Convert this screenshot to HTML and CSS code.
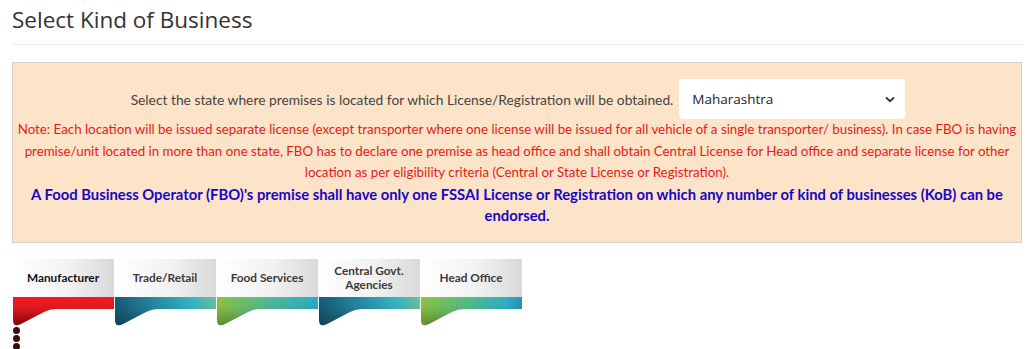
FILE: index.html
```
<!DOCTYPE html>
<html>
<head>
	<meta charset="utf-8">
	<title>Select Kind of Business</title>
	<link rel="stylesheet" href="styles.css">
</head>
<body>
	<div class="page">
		<h2 class="title">Select Kind of Business</h2>

		<div class="notice">
			<div class="state-row">
				<label for="state">Select the state where premises is located for which License/Registration will be obtained.</label>
				<div class="select">
					<span>Maharashtra</span>
					<svg width="10" height="7" viewBox="0 0 10 7"><path d="M1 1.5 L5 5.2 L9 1.5" fill="none" stroke="#333" stroke-width="1.8"/></svg>
				</div>
			</div>
			<p class="note-red">Note: Each location will be issued separate license (except transporter where one license will be issued for all vehicle of a single transporter/ business). In case FBO is having premise/unit located in more than one state, FBO has to declare one premise as head office and shall obtain Central License for Head office and separate license for other location as per eligibility criteria (Central or State License or Registration).</p>
			<p class="note-blue">A Food Business Operator (FBO)'s premise shall have only one FSSAI License or Registration on which any number of kind of businesses (KoB) can be endorsed.</p>
		</div>

		<ul class="kob-tabs">
			<li class="tab active">
				<div class="tab-label">Manufacturer</div>
				<svg class="band" width="102" height="32" viewBox="0 0 102 32">
					<defs>
						<linearGradient id="gRed" x1="0" y1="0" x2="0" y2="1">
							<stop offset="0" stop-color="#f01c24"/>
							<stop offset="0.4" stop-color="#e0171e"/>
							<stop offset="1" stop-color="#7a0a0c"/>
						</linearGradient>
					</defs>
					<path d="M0 0 H102 V12 H44 Q38 12 32 15 L9 27 Q1 31 1 23 V0 Z" fill="url(#gRed)"/>
				</svg>
				<div class="dots"><span></span><span></span><span></span></div>
			</li>
			<li class="tab">
				<div class="tab-label">Trade/Retail</div>
				<svg class="band" width="102" height="32" viewBox="0 0 102 32">
					<defs>
						<linearGradient id="gTeal1" x1="0" y1="0" x2="1" y2="0">
							<stop offset="0" stop-color="#145a78"/>
							<stop offset="0.75" stop-color="#36b4c8"/>
							<stop offset="1" stop-color="#6cc39a"/>
						</linearGradient>
						<linearGradient id="gShade" x1="0" y1="0" x2="0" y2="1">
							<stop offset="0" stop-color="#000" stop-opacity="0"/>
							<stop offset="0.4" stop-color="#000" stop-opacity="0.05"/>
							<stop offset="1" stop-color="#000" stop-opacity="0.3"/>
						</linearGradient>
					</defs>
					<path d="M0 0 H102 V12 H44 Q38 12 32 15 L9 27 Q1 31 1 23 V0 Z" fill="url(#gTeal1)"/>
					<path d="M0 0 H102 V12 H44 Q38 12 32 15 L9 27 Q1 31 1 23 V0 Z" fill="url(#gShade)"/>
				</svg>
			</li>
			<li class="tab">
				<div class="tab-label">Food Services</div>
				<svg class="band" width="102" height="32" viewBox="0 0 102 32">
					<defs>
						<linearGradient id="gGreen1" x1="0" y1="0" x2="1" y2="0">
							<stop offset="0" stop-color="#8dc63f"/>
							<stop offset="0.55" stop-color="#4dbb9a"/>
							<stop offset="1" stop-color="#2aaec8"/>
						</linearGradient>
					</defs>
					<path d="M0 0 H102 V12 H44 Q38 12 32 15 L9 27 Q1 31 1 23 V0 Z" fill="url(#gGreen1)"/>
					<path d="M0 0 H102 V12 H44 Q38 12 32 15 L9 27 Q1 31 1 23 V0 Z" fill="url(#gShade)"/>
				</svg>
			</li>
			<li class="tab">
				<div class="tab-label two-line">Central Govt.<br>Agencies</div>
				<svg class="band" width="102" height="32" viewBox="0 0 102 32">
					<path d="M0 0 H102 V12 H44 Q38 12 32 15 L9 27 Q1 31 1 23 V0 Z" fill="url(#gTeal1)"/>
					<path d="M0 0 H102 V12 H44 Q38 12 32 15 L9 27 Q1 31 1 23 V0 Z" fill="url(#gShade)"/>
				</svg>
			</li>
			<li class="tab">
				<div class="tab-label">Head Office</div>
				<svg class="band" width="102" height="32" viewBox="0 0 102 32">
					<defs>
						<linearGradient id="gGreen2" x1="0" y1="0" x2="1" y2="0">
							<stop offset="0" stop-color="#8dc63f"/>
							<stop offset="0.5" stop-color="#52bd8e"/>
							<stop offset="0.85" stop-color="#2fb0c8"/>
							<stop offset="1" stop-color="#2398b0"/>
						</linearGradient>
					</defs>
					<path d="M0 0 H102 V12 H44 Q38 12 32 15 L9 27 Q1 31 1 23 V0 Z" fill="url(#gGreen2)"/>
					<path d="M0 0 H102 V12 H44 Q38 12 32 15 L9 27 Q1 31 1 23 V0 Z" fill="url(#gShade)"/>
				</svg>
			</li>
		</ul>
	</div>
</body>
</html>
```

FILE: styles.css
```
* {
	padding: 0;
	margin: 0;
	box-sizing: border-box;
}
li {
	list-style: none;
}
body {
	background: #fff;
	font-family: "Lato", "Liberation Sans", sans-serif;
	color: #333;
}
.page {
	padding: 0 6px 0 12px;
}
.title {
	font-family: "Open Sans", "Liberation Sans", sans-serif;
	font-weight: 400;
	font-size: 22.5px;
	line-height: 31px;
	color: #333;
	padding: 4px 0 9px;
	border-bottom: 1px solid #eeeeee;
}
.notice {
	margin-top: 17px;
	background: #fde3c7;
	border: 1px solid #d8d0c6;
	text-align: center;
	padding: 16px 4px 15px;
}
.state-row {
	display: flex;
	justify-content: center;
	align-items: center;
	gap: 6px;
	margin-bottom: 0;
	padding-left: 2px;
}
.state-row label {
	font-size: 13.8px;
	color: #444;
}
.select {
	width: 226px;
	height: 40px;
	background: #fff;
	border-radius: 4px;
	display: flex;
	align-items: center;
	justify-content: space-between;
	padding: 0 10px 0 13px;
	font-family: "Open Sans", "Liberation Sans", sans-serif;
	font-size: 13.5px;
	color: #222;
}
.note-red {
	color: #e41c1c;
	font-size: 13.3px;
	line-height: 21.5px;
}
.note-blue {
	color: #1608c8;
	font-weight: 700;
	font-size: 14.8px;
	line-height: 21.5px;
}
.kob-tabs {
	display: flex;
	margin-top: 16px;
}
.tab {
	width: 102px;
}
.tab-label {
	height: 38px;
	display: flex;
	align-items: center;
	justify-content: center;
	text-align: center;
	font-size: 11.8px;
	font-weight: 700;
	color: #3a3a3a;
	line-height: 14px;
	background: linear-gradient(to right, #ffffff 0%, #f2f2f2 55%, #d9d9d9 100%);
}
.tab.active .tab-label {
	color: #111;
}
.band {
	display: block;
}
.dots {
	display: flex;
	flex-direction: column;
	gap: 1px;
	margin: -2px 0 0 1px;
	width: 7px;
}
.dots span {
	display: block;
	width: 7px;
	height: 7px;
	border-radius: 50%;
	background: #3b0a0a;
}
```
